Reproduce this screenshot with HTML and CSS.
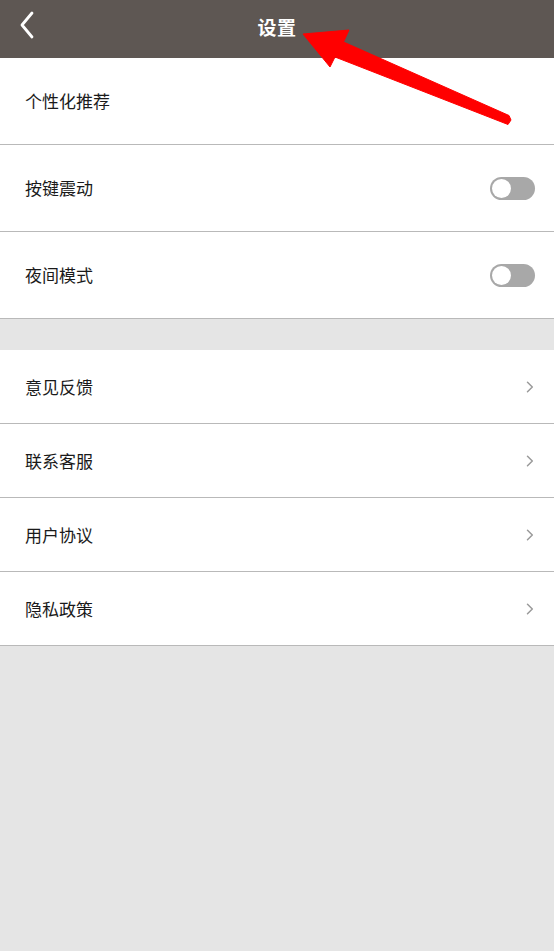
FILE: index.html
```html
<!DOCTYPE html>
<html lang="zh-CN">
<head>
<meta charset="utf-8">
<title>设置</title>
<link rel="stylesheet" href="styles.css">
</head>
<body>
<div class="page">
  <header class="topbar">
    <span class="back">
      <svg width="16" height="28" viewBox="0 0 16 28"><path d="M13 2 L3 14 L13 26" fill="none" stroke="#fff" stroke-width="2.8" stroke-linecap="round" stroke-linejoin="round"/></svg>
    </span>
    <h1 class="title">设置</h1>
  </header>

  <section class="group group-tall">
    <div class="row"><span class="label">个性化推荐</span></div>
    <div class="row"><span class="label">按键震动</span><span class="toggle"><span class="knob"></span></span></div>
    <div class="row"><span class="label">夜间模式</span><span class="toggle"><span class="knob"></span></span></div>
  </section>

  <section class="group group-short">
    <div class="row"><span class="label">意见反馈</span><span class="chev"><svg width="8" height="12" viewBox="0 0 8 12"><path d="M1.5 1.2 L6.3 6 L1.5 10.8" fill="none" stroke="#9a9a9a" stroke-width="1.5" stroke-linecap="round" stroke-linejoin="round"/></svg></span></div>
    <div class="row"><span class="label">联系客服</span><span class="chev"><svg width="8" height="12" viewBox="0 0 8 12"><path d="M1.5 1.2 L6.3 6 L1.5 10.8" fill="none" stroke="#9a9a9a" stroke-width="1.5" stroke-linecap="round" stroke-linejoin="round"/></svg></span></div>
    <div class="row"><span class="label">用户协议</span><span class="chev"><svg width="8" height="12" viewBox="0 0 8 12"><path d="M1.5 1.2 L6.3 6 L1.5 10.8" fill="none" stroke="#9a9a9a" stroke-width="1.5" stroke-linecap="round" stroke-linejoin="round"/></svg></span></div>
    <div class="row"><span class="label">隐私政策</span><span class="chev"><svg width="8" height="12" viewBox="0 0 8 12"><path d="M1.5 1.2 L6.3 6 L1.5 10.8" fill="none" stroke="#9a9a9a" stroke-width="1.5" stroke-linecap="round" stroke-linejoin="round"/></svg></span></div>
  </section>

  <svg class="annot" width="554" height="140" viewBox="0 0 554 140">
    <polygon points="303,34 349,30 343.5,42 509,115.5 511,120 508,124.5 335,57 330,67" fill="#ff0000" stroke="#ff0000" stroke-width="1" stroke-linejoin="round"/>
  </svg>
</div>
</body>
</html>
```
FILE: styles.css
```css
* { box-sizing: border-box; }
html, body { margin: 0; padding: 0; }
body {
  background: #e5e5e5;
  font-family: "Noto Sans CJK SC", "Noto Sans", sans-serif;
}
.page {
  position: relative;
  width: 554px;
  min-height: 951px;
  background: #e5e5e5;
}
.topbar {
  height: 58px;
  background: #5e5753;
  display: flex;
  align-items: center;
  justify-content: center;
  position: relative;
}
.back {
  position: absolute;
  left: 19px;
  top: 11px;
  display: flex;
}
.title {
  margin: 0;
  color: #fff;
  font-size: 19px;
  font-weight: 700;
  letter-spacing: 0.5px;
  margin-top: -5px;
}
.group {
  background: #fff;
}
.group-short { margin-top: 31px; }
.row {
  display: flex;
  align-items: center;
  justify-content: space-between;
  padding: 0 19px 0 25px;
  border-bottom: 1px solid #b9b9b9;
}
.group-tall .row { height: 87px; }
.group-short .row { height: 74px; }
.label {
  font-size: 17px;
  color: #1a1a1a;
  margin-top: -1px;
}
.toggle {
  width: 45px;
  height: 23px;
  border-radius: 12px;
  background: #a8a8a8;
  display: flex;
  align-items: center;
  padding-left: 2px;
  margin-top: 1px;
}
.knob {
  width: 19px;
  height: 19px;
  border-radius: 50%;
  background: #fff;
}
.chev {
  display: flex;
  margin-right: 1px;
}
.annot {
  position: absolute;
  left: 0;
  top: 0;
  pointer-events: none;
}
```
